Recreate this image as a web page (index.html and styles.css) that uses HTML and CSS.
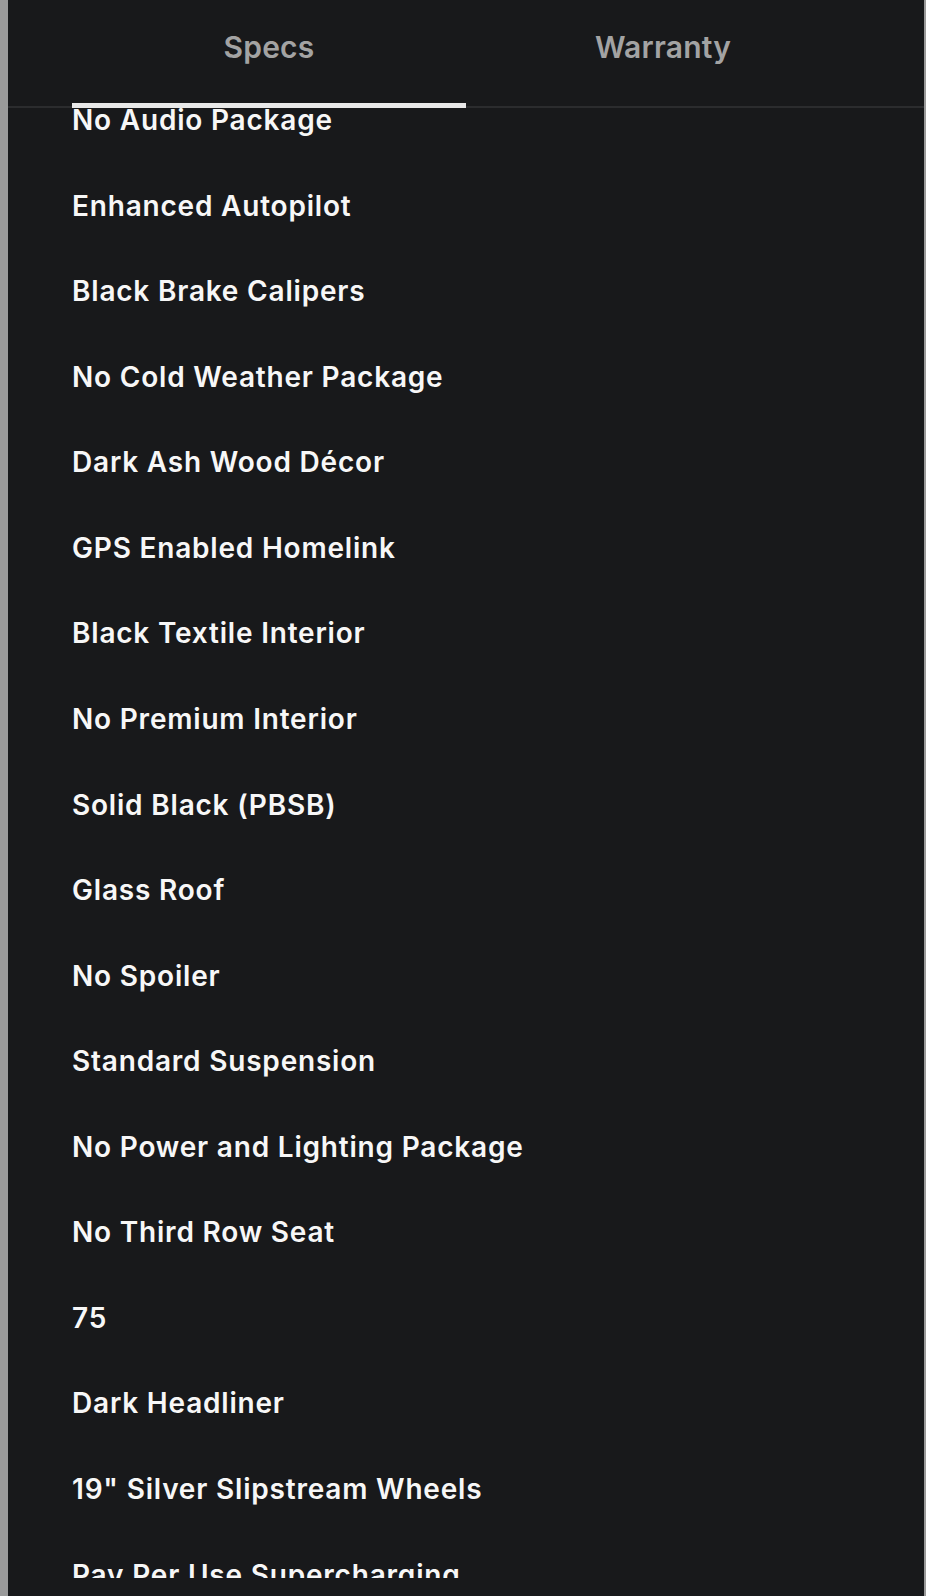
FILE: index.html
```html
<!DOCTYPE html>
<html lang="en">
<head>
<meta charset="utf-8">
<title>Specs</title>
<link rel="stylesheet" href="styles.css">
</head>
<body>
<div class="panel">
  <div class="tabs">
    <div class="tab active">Specs</div>
    <div class="tab">Warranty</div>
  </div>
  <div class="scroller">
    <ul class="specs">
      <li>No Audio Package</li>
      <li>Enhanced Autopilot</li>
      <li>Black Brake Calipers</li>
      <li>No Cold Weather Package</li>
      <li>Dark Ash Wood Décor</li>
      <li>GPS Enabled Homelink</li>
      <li>Black Textile Interior</li>
      <li>No Premium Interior</li>
      <li>Solid Black (PBSB)</li>
      <li>Glass Roof</li>
      <li>No Spoiler</li>
      <li>Standard Suspension</li>
      <li>No Power and Lighting Package</li>
      <li>No Third Row Seat</li>
      <li>75</li>
      <li>Dark Headliner</li>
      <li>19" Silver Slipstream Wheels</li>
      <li>Pay Per Use Supercharging</li>
      <li>No Towing Package</li>
    </ul>
  </div>
</div>
</body>
</html>
```
FILE: styles.css
```css
html, body {
  margin: 0;
  padding: 0;
  height: 1596px;
  overflow: hidden;
  background: #9a9a9a;
}
.panel {
  margin: 0 2px 0 8px;
  height: 1596px;
  overflow: hidden;
  background: #18191b;
  font-family: Inter, "Noto Sans", sans-serif;
}
.tabs {
  display: flex;
  height: 108px;
  box-sizing: border-box;
  padding: 0 64px;
  border-bottom: 2px solid #2b2c2e;
}
.tab {
  position: relative;
  flex: 1;
  text-align: center;
  padding-top: 32px;
  line-height: 30px;
  font-size: 30px;
  font-weight: 600;
  letter-spacing: 0.2px;
  color: #a3a3a3;
}
.tab.active::after {
  content: "";
  position: absolute;
  left: 0;
  right: 0;
  bottom: -2px;
  height: 5px;
  background: #e8e8e8;
}
.scroller {
  height: 1470px;
  overflow: hidden;
}
.specs {
  list-style: none;
  margin: 0;
  padding: 2px 0 0 64px;
}
.specs li {
  height: 85.57px;
  line-height: 20px;
  font-size: 28px;
  font-weight: 600;
  letter-spacing: 0.8px;
  color: #f7f7f7;
}
```
